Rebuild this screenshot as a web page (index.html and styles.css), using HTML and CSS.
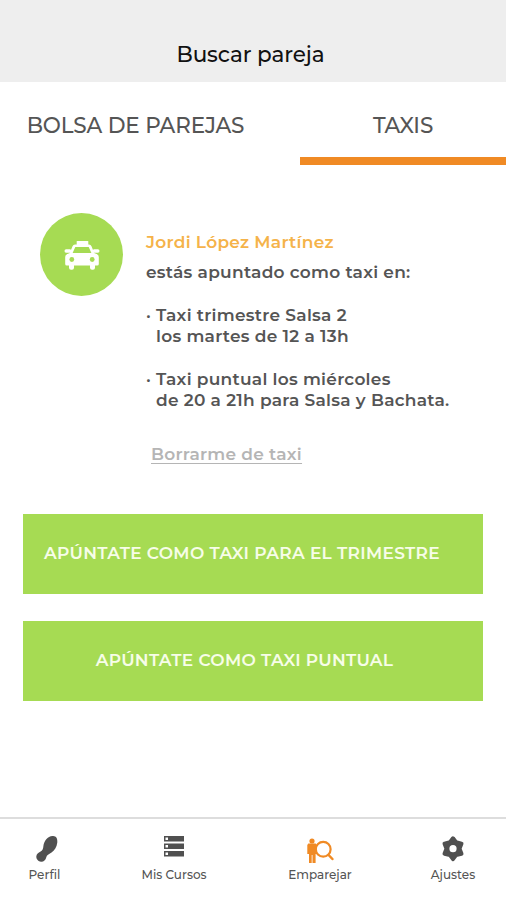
FILE: index.html
```html
<!DOCTYPE html>
<html lang="es">
<head>
    <meta charset="UTF-8">
    <meta name="viewport" content="width=device-width, initial-scale=1.0">
    <title>Buscar pareja</title>
    <link rel="stylesheet" href="styles.css">
</head>
<body>
    <div class="app">
        <header class="header">
            <h1>Buscar pareja</h1>
        </header>

        <div class="tabs">
            <a class="tab tab-bolsa">BOLSA DE PAREJAS</a>
            <a class="tab tab-taxis active">TAXIS</a>
        </div>

        <main class="content">
            <section class="status">
                <div class="avatar">
                    <svg width="36" height="30" viewBox="0 0 36 30">
                        <g fill="#fff">
                            <rect x="12.700" y="1" width="11.600" height="5" rx="0.600"/>
                            <path fill-rule="evenodd" d="M11 4.500h14q1.800 0 2.500 1.800l2.700 6.700q4.600 1.200 4.600 4v7q0 1.500-1.500 1.500H2.700q-1.500 0-1.500-1.500v-7q0-2.800 4.600-4l2.700-6.700q.7-1.800 2.500-1.800zM11.300 6.900L8.600 13h18.800l-2.700-6.100z"/>
                            <rect x="0.500" y="9.300" width="7" height="3.400" rx="1.600"/>
                            <rect x="28.500" y="9.300" width="7" height="3.400" rx="1.600"/>
                            <rect x="5" y="23" width="5" height="6.800" rx="2"/>
                            <rect x="26" y="23" width="5" height="6.800" rx="2"/>
                        </g>
                        <circle cx="7.800" cy="19.500" r="2.400" fill="#a6db53"/>
                        <circle cx="28.200" cy="19.500" r="2.400" fill="#a6db53"/>
                    </svg>
                </div>
                <div class="info">
                    <h2>Jordi López Martínez</h2>
                    <p class="intro">estás apuntado como taxi en:</p>
                    <ul>
                        <li>Taxi trimestre Salsa 2<br>los martes de 12 a 13h</li>
                        <li>Taxi puntual los miércoles<br>de 20 a 21h para Salsa y Bachata.</li>
                    </ul>
                    <a class="remove">Borrarme de taxi</a>
                </div>
            </section>

            <button class="btn btn-trimestre">APÚNTATE COMO TAXI PARA EL TRIMESTRE</button>
            <button class="btn btn-puntual">APÚNTATE COMO TAXI PUNTUAL</button>
        </main>

        <nav class="nav">
            <a class="nav-item perfil">
                <svg width="24" height="28" viewBox="0 0 24 28">
                    <path fill="#505050" d="M17.500 1C21 .6 22.800 3.500 22.300 7.500c-.5 4.800-2.800 8-5.800 10-2.800 1.800-4.700 2.500-5.200 4.800-.8 3-2.600 4.700-5.300 4.500C3.400 26.600 1.200 24.500 1.300 21.600c.2-2.600 2-4 4.300-5.100 2.300-1.300 2.500-2.800 2.800-5.400C9 6 12.500 1.500 17.500 1z"/>
                </svg>
                <span>Perfil</span>
            </a>
            <a class="nav-item cursos">
                <svg width="20" height="28" viewBox="0 0 20 28">
                    <path fill="#505050" d="M0 1h20v5.500H0zM0 8.500h20V14H0zM0 16h20v5.500H0z"/>
                    <path fill="#fff" d="M1.500 2.500H4v2.500H1.500zM1.500 10H4v2.500H1.500zM1.500 17.500H4V20H1.500z"/>
                </svg>
                <span>Mis Cursos</span>
            </a>
            <a class="nav-item emparejar">
                <svg width="28" height="28" viewBox="0 0 28 28">
                    <g fill="#f08a24">
                        <circle cx="6" cy="6" r="2.600"/>
                        <path d="M2.300 8.500h7.400l1.300 1.600V19H9.600v9H6.500v-8h-.8v8H3v-9H1.300v-8.900z"/>
                    </g>
                    <circle cx="17.200" cy="14.300" r="7.400" fill="#fff" stroke="#f08a24" stroke-width="2.200"/>
                    <path d="M22.600 20l3.800 4" stroke="#f08a24" stroke-width="2.500" stroke-linecap="round"/>
                </svg>
                <span>Emparejar</span>
            </a>
            <a class="nav-item ajustes">
                <svg width="26" height="28" viewBox="0 0 26 28">
                    <path fill="#505050" stroke="#505050" stroke-width="4" stroke-linejoin="round" d="M13 3.300l3 4 5.500 1.300-2 5.100 2 5.100-5.500 1.300-3 4-3-4-5.500-1.300 2-5.100-2-5.100L10 7.300z"/>
                    <circle cx="13" cy="13.700" r="3.600" fill="#fff"/>
                </svg>
                <span>Ajustes</span>
            </a>
        </nav>
    </div>
</body>
</html>
```
FILE: styles.css
```css
* {
    box-sizing: border-box;
}

body {
    margin: 0;
    background: #fff;
    font-family: Montserrat, Inter, sans-serif;
    color: #555;
}

h1, h2, p, ul {
    margin: 0;
    padding: 0;
    font-weight: inherit;
}

.app {
    display: flex;
    flex-direction: column;
    width: 506px;
    height: 900px;
}

.header {
    height: 82px;
    padding-top: 40px;
    padding-right: 5px;
    background: #eee;
    text-align: center;
}

.header h1 {
    font-size: 21.5px;
    font-weight: 500;
    line-height: 28px;
    letter-spacing: -0.1px;
    color: #111;
}

.tabs {
    display: flex;
    height: 83px;
}

.tab {
    padding-top: 29px;
    font-size: 21.5px;
    font-weight: 500;
    line-height: 28px;
    letter-spacing: -0.15px;
    text-align: center;
}

.tab-bolsa {
    width: 300px;
    padding-right: 29px;
}

.tab-taxis {
    flex: 1;
}

.tab.active {
    border-bottom: 8px solid #f08a24;
}

.content {
    flex: 1;
    padding: 48px 23px 0;
}

.status {
    display: flex;
    height: 301px;
    padding-left: 17px;
}

.avatar {
    display: flex;
    align-items: center;
    justify-content: center;
    width: 83px;
    height: 83px;
    margin-right: 23px;
    border-radius: 50%;
    background: #a6db53;
}

.info {
    padding-top: 19px;
    font-size: 17px;
    font-weight: 600;
    line-height: 21.4px;
    letter-spacing: 0.27px;
    white-space: nowrap;
}

.info h2 {
    font-size: 17px;
    color: #f5b34a;
}

.intro {
    margin-top: 9px;
}

.info ul {
    list-style: none;
    margin-top: 21px;
}

.info li {
    margin-bottom: 21.4px;
    padding-left: 10px;
}

.info li::before {
    content: "·";
    float: left;
    width: 10px;
    margin-left: -10px;
}

.remove {
    display: inline-block;
    margin: 11px 0 0 5px;
    color: #b5b5b5;
    text-decoration: underline;
    text-decoration-thickness: 1px;
    text-underline-offset: 3px;
}

.btn {
    display: block;
    width: 460px;
    height: 80px;
    margin-bottom: 26.5px;
    padding: 0 22px 2px 0;
    border: none;
    background: #a6db53;
    color: #f7fde8;
    font-family: inherit;
    font-size: 17px;
    font-weight: 600;
    letter-spacing: 0.29px;
    white-space: nowrap;
}

.btn-puntual {
    padding-right: 17px;
}

.nav {
    display: flex;
    height: 83px;
    padding-top: 16px;
    border-top: 2px solid #ddd;
}

.nav-item {
    display: flex;
    flex-direction: column;
    align-items: center;
    font-size: 12px;
    font-weight: 500;
    line-height: 16px;
}

.nav-item span {
    margin-top: 4px;
}

.perfil {
    width: 108px;
    padding-right: 19px;
}

.perfil svg {
    margin-left: 5px;
}

.cursos {
    width: 132px;
}

.emparejar {
    width: 160px;
}

.ajustes {
    width: 106px;
}
```
